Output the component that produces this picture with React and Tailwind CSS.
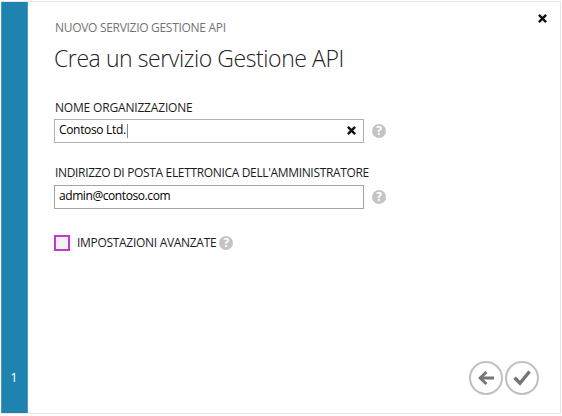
function CrossIcon() {
  return (
    <svg className="block h-[9px] w-[9px]" viewBox="0 0 9 9" fill="none" stroke="#111" strokeWidth="2.4">
      <path d="M0.9 0.9L8.1 8.1M8.1 0.9L0.9 8.1" />
    </svg>
  );
}

function HelpIcon() {
  return (
    <span className="flex h-[14px] w-[14px] shrink-0 items-center justify-center rounded-full bg-[#c4c4c4] text-[12px] leading-[14px] font-bold text-white">
      ?
    </span>
  );
}

function RoundButton({ label, children }) {
  return (
    <button aria-label={label} className="flex h-[34px] w-[34px] items-center justify-center rounded-full border-2 border-[#c0c0c0] bg-white">
      {children}
    </button>
  );
}

export default function App() {
  return (
    <div className="h-[416px] w-[562px] overflow-hidden bg-white pt-px pl-px font-['Open_Sans','Noto_Sans',sans-serif] text-[#1c1c1c]">
      <div className="flex h-[413px] w-[560px] border-t border-r border-b border-[#e6e6e6]">
        <aside className="flex w-[27px] shrink-0 flex-col justify-end border-x border-[#4b9cc0] bg-[#1f83af] pr-px pb-[27px] text-center text-[13px] leading-[18px] text-white">
          1
        </aside>

        <main className="relative flex flex-1 flex-col pl-[26px]">
          <button aria-label="Chiudi" className="absolute top-[12px] right-[13px]">
            <CrossIcon />
          </button>

          <header className="pt-[17px] whitespace-nowrap">
            <p className="h-[18px] pl-px text-[12px] leading-[18px] tracking-[-0.3px] text-[#737373]">NUOVO SERVIZIO GESTIONE API</p>
            <h1 className="mt-[4px] h-[34px] text-[23px] leading-[35px] font-light tracking-[-0.42px] text-[#222]">Crea un servizio Gestione API</h1>
          </header>

          <label className="mt-[23px] h-[20px] pl-px text-[12px] leading-[20px] tracking-[-0.18px] whitespace-nowrap">NOME ORGANIZZAZIONE</label>
          <div className="mt-px flex items-start gap-2">
            <div className="flex h-[24px] w-[310px] items-center justify-between border border-[#b0b0b0] pr-[7px] pb-[2px] pl-[4px]">
              <span className="flex items-center text-[12px] leading-[18px] font-medium tracking-[-0.33px] whitespace-nowrap text-black">
                Contoso Ltd.
                <i className="mt-[2px] ml-px h-[14px] w-px bg-[#888]" />
              </span>
              <CrossIcon />
            </div>
            <span className="pt-[5px]">
              <HelpIcon />
            </span>
          </div>

          <label className="mt-[20px] h-[20px] pl-px text-[12px] leading-[20px] tracking-[-0.34px] whitespace-nowrap">INDIRIZZO DI POSTA ELETTRONICA DELL'AMMINISTRATORE</label>
          <div className="mt-[2px] flex items-start gap-2">
            <div className="flex h-[24px] w-[310px] items-center border border-[#a4a4a4] pb-[2px] pl-[4px] text-[12px] leading-[18px] font-medium tracking-[-0.42px] whitespace-nowrap text-black">
              admin@contoso.com
            </div>
            <span className="pt-[5px]">
              <HelpIcon />
            </span>
          </div>

          <div className="mt-[26px] flex h-[16px] items-center">
            <span className="h-[16px] w-[16px] border-2 border-[#c437d4] bg-[#f1f1f1]" />
            <span className="ml-[7px] text-[12px] leading-[16px] tracking-[-0.3px] whitespace-nowrap">IMPOSTAZIONI AVANZATE</span>
            <span className="ml-[3px]">
              <HelpIcon />
            </span>
          </div>

          <footer className="mt-auto mr-[21px] mb-[18px] flex justify-end gap-[2px]">
            <RoundButton label="Indietro">
              <svg className="h-[18px] w-[18px] shrink-0" viewBox="0 0 18 18" fill="none" stroke="#757575" strokeWidth="3">
                <path d="M17 9H3" />
                <path d="M9.4 3L3.2 9L9.4 15" />
              </svg>
            </RoundButton>
            <RoundButton label="Conferma">
              <svg className="h-[18px] w-[18px] shrink-0" viewBox="0 0 18 18" fill="none" stroke="#757575" strokeWidth="3.4">
                <path d="M1.5 8.7L7 14.2L16.5 2.5" />
              </svg>
            </RoundButton>
          </footer>
        </main>
      </div>
    </div>
  );
}
